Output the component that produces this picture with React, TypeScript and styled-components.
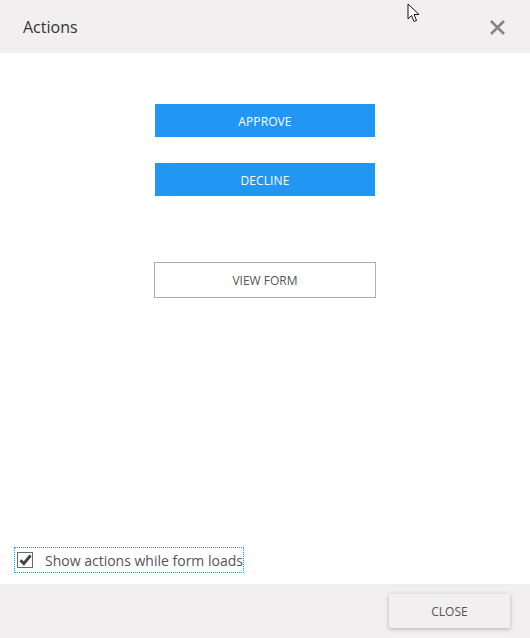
import styled, { createGlobalStyle } from 'styled-components';

const GlobalStyle = createGlobalStyle`
  html, body {
    margin: 0;
    padding: 0;
    background: #fff;
  }
  body {
    font-family: 'Open Sans', 'Liberation Sans', sans-serif;
  }
`;

const Dialog = styled.div`
  position: relative;
  width: 530px;
  height: 638px;
  display: flex;
  flex-direction: column;
  background: #fff;
  overflow: hidden;
`;

const Header = styled.div`
  height: 53px;
  flex-shrink: 0;
  background: #f1eff0;
  display: flex;
  align-items: center;
  justify-content: space-between;
  padding: 0 24px 0 23px;
  box-sizing: border-box;
`;

const Title = styled.h1`
  margin: 0;
  font-size: 16px;
  font-weight: 400;
  color: #333;
`;

const CloseIcon = styled.button`
  border: 0;
  background: none;
  padding: 0;
  width: 18px;
  height: 18px;
  display: flex;
  align-items: center;
  justify-content: center;
  cursor: pointer;
  position: relative;
  top: 1px;
`;

const Body = styled.div`
  flex: 1;
  display: flex;
  flex-direction: column;
  justify-content: space-between;
  padding: 51px 0 11px 14px;
  box-sizing: border-box;
`;

const Actions = styled.div`
  display: flex;
  flex-direction: column;
  align-items: center;
  margin-left: -14px;
`;

const PrimaryButton = styled.button<{ $gap?: number }>`
  width: 220px;
  height: 33px;
  border: 0;
  padding: 1px 0 0;
  background: #2196f3;
  color: #fff;
  font-family: inherit;
  font-size: 12px;
  letter-spacing: 0.1px;
  margin-bottom: ${({ $gap }) => $gap ?? 0}px;
  cursor: pointer;
`;

const OutlineButton = styled.button`
  width: 222px;
  height: 36px;
  border: 1px solid #adadad;
  background: #fff;
  color: #555;
  font-family: inherit;
  font-size: 12px;
  cursor: pointer;
`;

const CheckRow = styled.label`
  align-self: flex-start;
  display: flex;
  align-items: center;
  gap: 12px;
  height: 26px;
  padding: 0 1px 0 3px;
  outline: 1px dotted #1aa3e6;
  outline-offset: -1px;
  box-sizing: border-box;
  font-size: 14px;
  color: #555;
`;

const Box = styled.span`
  width: 16px;
  height: 16px;
  border: 1px solid #6a6a6a;
  box-sizing: border-box;
  display: flex;
  align-items: center;
  justify-content: center;
  background: #fff;
`;

const Footer = styled.div`
  height: 54px;
  flex-shrink: 0;
  background: #f1eff0;
  display: flex;
  align-items: center;
  justify-content: flex-end;
  padding: 0 20px 0 0;
  box-sizing: border-box;
`;

const FooterButton = styled.button`
  width: 121px;
  height: 34px;
  border: 0;
  background: #f1eff0;
  box-shadow: 0 1px 4px rgba(0, 0, 0, 0.28);
  color: #555;
  font-family: inherit;
  font-size: 12px;
  cursor: pointer;
`;

const Pointer = styled.svg`
  position: absolute;
  left: 407px;
  top: 3px;
  pointer-events: none;
`;

export default function App() {
  return (
    <>
      <GlobalStyle />
      <Dialog>
        <Header>
          <Title>Actions</Title>
          <CloseIcon aria-label="Close">
            <svg width="17" height="17" viewBox="0 0 17 17">
              <path d="M2 2 L15 15 M15 2 L2 15" stroke="#858585" strokeWidth="2.6" />
            </svg>
          </CloseIcon>
        </Header>
        <Body>
          <Actions>
            <PrimaryButton $gap={26}>APPROVE</PrimaryButton>
            <PrimaryButton $gap={66}>DECLINE</PrimaryButton>
            <OutlineButton>VIEW FORM</OutlineButton>
          </Actions>
          <CheckRow>
            <Box>
              <svg width="13" height="12" viewBox="0 0 13 12">
                <path d="M1.5 6.3 L4.8 9.6 L11.5 1.5" fill="none" stroke="#444" strokeWidth="3" />
              </svg>
            </Box>
            <span>Show actions while form loads</span>
          </CheckRow>
        </Body>
        <Footer>
          <FooterButton>CLOSE</FooterButton>
        </Footer>
        <Pointer width="14" height="21" viewBox="0 0 14 21">
          <path d="M1 1 L1 16 L4.5 12.5 L7 18.5 L9.5 17.5 L7 11.5 L12 11.5 Z" fill="#fff" stroke="#111" strokeWidth="1" strokeLinejoin="round" />
        </Pointer>
      </Dialog>
    </>
  );
}
